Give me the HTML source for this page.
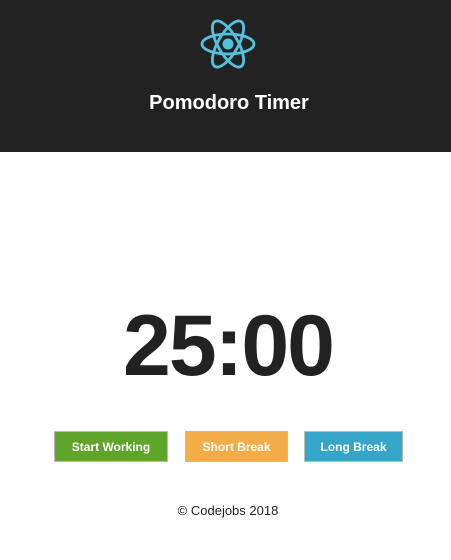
<!DOCTYPE html>
<html><head><style>
body{margin:0;width:451px;height:560px;background:#fff;font-family:"Liberation Sans",sans-serif;position:relative;overflow:hidden}
.hdr{position:absolute;left:0;top:0;width:451px;height:152px;background:#222}
.t{position:absolute;left:0;width:458px;text-align:center;top:92px;color:#fff;font-weight:bold;font-size:20px}
.tm{position:absolute;left:0;width:456px;text-align:center;top:296px;color:#222;font-weight:bold;font-size:86px;line-height:100px;letter-spacing:-2px}
.b{position:absolute;top:431px;height:31px;color:#fff;font-weight:bold;font-size:12px;line-height:31px;text-align:center;box-sizing:border-box;border:1px solid #bbb}
.f{position:absolute;left:0;width:456px;text-align:center;top:503px;font-size:13px;color:#222}
</style></head><body>
<div class="hdr">
<svg style="position:absolute;left:200px;top:14px" width="56" height="60" viewBox="-28 -30 56 60">
<g fill="none" stroke="#53c1de" stroke-width="2.8">
<ellipse rx="26" ry="10"/>
<ellipse rx="26" ry="10" transform="rotate(60)"/>
<ellipse rx="26" ry="10" transform="rotate(120)"/>
</g><circle r="5.5" fill="#53c1de"/></svg>
<div class="t">Pomodoro Timer</div>
</div>
<div class="tm">25:00</div>
<div class="b" style="left:54px;width:114px;background:#5fa52a">Start Working</div>
<div class="b" style="left:185px;width:103px;background:#f3ad48">Short Break</div>
<div class="b" style="left:304px;width:99px;background:#35a5c8">Long Break</div>
<div class="f">© Codejobs 2018</div>
</body></html>
